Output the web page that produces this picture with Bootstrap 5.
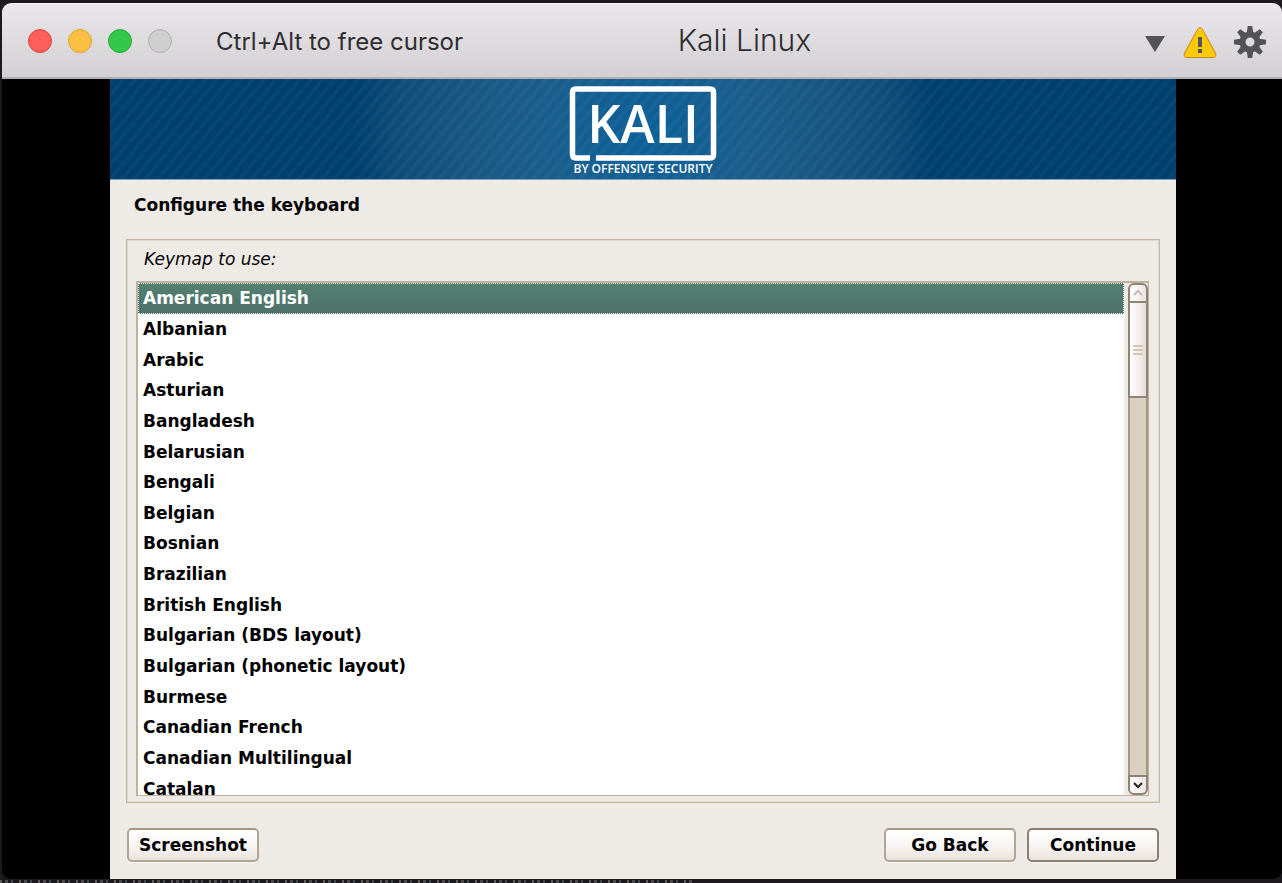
<!DOCTYPE html>
<html lang="en">
<head>
<meta charset="utf-8">
<meta name="viewport" content="width=device-width, initial-scale=1">
<title>Kali Linux</title>
<link href="https://cdn.jsdelivr.net/npm/bootstrap@5.3.0/dist/css/bootstrap.min.css" rel="stylesheet">
<style>
  body { background: #1b191b; font-family: "DejaVu Sans", sans-serif; color: #000; }
  .desktop { padding: 3px 0 4px 2px; background:
    repeating-linear-gradient(90deg, #5b5d61 0 2px, #1b191b 2px 5px, #4c4a4c 5px 8px, #1b191b 8px 11px, #3c4a55 11px 13px, #1b191b 13px 19px) bottom left / 54% 3px no-repeat, #1b191b; }
  .vm-window { background: #000; border-radius: 9px; overflow: hidden; }
  .titlebar { height: 76px; padding: 2px 16px 0 26px; background: linear-gradient(#f4f3f4 0, #e9e7e9 2px, #d2d0d2 100%); border-bottom: 2px solid #b0aeb0; color: #2e2d2f; font-family: Inter, sans-serif; }
  .side-start { flex: 10 1 0; }
  .side-end { flex: 7 1 0; gap: 17px; padding-top: 2px; }
  .light { width: 24px; height: 24px; padding: 0; border: 1px solid; border-radius: 50%; }
  .light-close { background: #fd605c; border-color: #e0443f; }
  .light-min { background: #fdbf43; border-color: #dfa033; }
  .light-max { background: #34c84a; border-color: #23ab35; }
  .light-off { background: #d0cfd0; border-color: #b1b0b1; }
  .hint { font-size: 24px; line-height: 32px; margin-left: 44px; padding-top: 2px; }
  .vm-title { font-size: 30px; font-weight: 300; line-height: 36px; padding-bottom: 2px; }
  .tool { border: 0; padding: 0; background: none; line-height: 0; }
  .screen { margin: 0 106px 0 108px; background: #eeebe6; }
  .banner { height: 101px; border-bottom: 1px solid #7fa3bf; background:
    repeating-linear-gradient(130deg, rgba(255,255,255,.03) 0 3px, transparent 4px 8px, rgba(255,255,255,.03) 9px),
    radial-gradient(circle 290px at 50% 50%, #0b6099 0, #1a5e8d 35%, #185680 65%, #0f4d79 85%, #003f6e 100%); }
  .step-title { font-size: 17px; line-height: 24px; font-weight: 700; padding: 13px 24px 0; margin-bottom: 22px; }
  .question { margin: 0 16px; padding: 7px 10px 6px 9px; border: 1px solid #c4b7a5; box-shadow: inset 0 0 0 1px #e0d9ce; }
  .question-label { font-size: 17px; font-style: italic; line-height: 24px; padding: 0 8px; margin-bottom: 10px; }
  .keymap-box { border: 2px solid #bfb1a0; border-width: 2px 1px 1px 2px; background: #fff; overflow: hidden; }
  .keymaps { height: calc(100% + 9px); }
  .keymap { flex: 1 1 0; min-height: 0; border: 0; padding: 0 5px; text-align: left; background: #fff; color: #000; font-size: 17px; font-weight: 700; line-height: 24px; }
  .keymap.chosen { background: linear-gradient(#54816f, #50786f 50%, #4f7168); color: #fff; outline: 1px dotted #e8efec; outline-offset: -1px; }
  .scroller { width: 24px; padding-left: 4px; background: #eeebe6; }
  .scroll-end { height: 20px; padding: 0; border: 2px solid #8f8373; background: linear-gradient(90deg, #fff, #ece4df); line-height: 0; }
  .scroll-up { border-radius: 6px 6px 0 0; }
  .scroll-down { border-radius: 0 0 6px 6px; }
  .scroll-thumb { height: 95px; border: 2px solid #8f8373; border-top: 0; background: linear-gradient(90deg, #fff, #f3ece9 60%, #e6dcd6); }
  .scroll-track { background: #dcd0c2; border: 2px solid #a49786; border-width: 0 2px; }
  .actions { padding: 25px 17px 17px; gap: 11px; }
  .gtk-btn { width: 132px; height: 34px; padding: 0; border: 2px solid #b3a595; border-top-color: #a59784; border-radius: 5px; background: linear-gradient(#fff, #f6f3f1 60%, #ebe2dc); color: #000; font-size: 17px; font-weight: 700; line-height: 24px; box-shadow: 0 1px 0 #f8f6f3; }
  .gtk-default { border-color: #8b7e72; }
</style>
</head>
<body>
<div class="desktop d-flex flex-column vh-100">
  <main class="vm-window d-flex flex-column flex-grow-1">
    <header class="titlebar d-flex align-items-center flex-shrink-0">
      <div class="side-start d-flex align-items-center">
        <div class="d-flex gap-3">
          <button class="light light-close" type="button" aria-label="Close"></button>
          <button class="light light-min" type="button" aria-label="Minimize"></button>
          <button class="light light-max" type="button" aria-label="Zoom"></button>
          <button class="light light-off" type="button" aria-label="Unavailable" disabled></button>
        </div>
        <span class="hint text-nowrap">Ctrl+Alt to free cursor</span>
      </div>
      <h1 class="vm-title mb-0 text-nowrap">Kali Linux</h1>
      <div class="side-end d-flex align-items-center justify-content-end">
        <button class="tool" type="button" aria-label="Menu"><svg width="22" height="34" viewBox="0 0 22 34"><path d="M1 11h20L11 27z" fill="#535255"/></svg></button>
        <button class="tool" type="button" aria-label="Warnings"><svg width="34" height="34" viewBox="0 0 34 34"><path d="M14.500 4.500q2.500-4 5 0L32.500 28q1.500 4-2.500 4.500H4q-4-.5-2.500-4.500z" fill="#fecb00" stroke="#c7802d"/><path d="M15 12h4v10h-4zm0 12h4v4h-4z" fill="#555"/></svg></button>
        <button class="tool" type="button" aria-label="Settings"><svg width="32" height="34" viewBox="-16 -17 32 34"><g fill="#535255"><path d="M-2.200-16h4.400L3.500-8h-7zM-2.200 16h4.400L3.500 8h-7zM-16-2.200v4.400L-8 3.500v-7zM16-2.200v4.400L8 3.500v-7z"/><path transform="rotate(45)" d="M-2.200-16h4.400L3.500-8h-7zM-2.200 16h4.400L3.500 8h-7zM-16-2.200v4.400L-8 3.500v-7zM16-2.200v4.400L8 3.500v-7z"/></g><circle r="7.500" fill="none" stroke="#535255" stroke-width="6"/></svg></button>
      </div>
    </header>
    <section class="screen d-flex flex-column flex-grow-1">
      <div class="banner text-center flex-shrink-0">
        <svg width="150" height="100" viewBox="0 0 150 100" role="img" aria-label="Kali by Offensive Security">
          <path d="M22 79H8q-3.500 0-3.500-3.500V13.500Q4.500 10 8 10h134q3.500 0 3.500 3.500V75.500q0 3.500-3.500 3.500H28" fill="none" stroke="#fff" stroke-width="5.500"/>
          <text x="75" y="64" text-anchor="middle" font-family="Open Sans, sans-serif" font-weight="600" font-size="52" fill="#fff">KALI</text>
          <text x="75" y="94" text-anchor="middle" font-family="Open Sans, sans-serif" font-weight="600" font-size="12" fill="#fff">BY OFFENSIVE SECURITY</text>
        </svg>
      </div>
      <h2 class="step-title">Configure the keyboard</h2>
      <div class="question d-flex flex-column flex-grow-1">
        <div class="question-label" id="keymap-label">Keymap to use:</div>
        <div class="keymap-box d-flex flex-grow-1">
          <div class="flex-grow-1 position-relative">
          <div class="keymaps position-absolute top-0 start-0 w-100 d-flex flex-column" role="listbox" aria-labelledby="keymap-label">
            <button class="keymap chosen" type="button" role="option" aria-selected="true">American English</button>
            <button class="keymap" type="button" role="option">Albanian</button>
            <button class="keymap" type="button" role="option">Arabic</button>
            <button class="keymap" type="button" role="option">Asturian</button>
            <button class="keymap" type="button" role="option">Bangladesh</button>
            <button class="keymap" type="button" role="option">Belarusian</button>
            <button class="keymap" type="button" role="option">Bengali</button>
            <button class="keymap" type="button" role="option">Belgian</button>
            <button class="keymap" type="button" role="option">Bosnian</button>
            <button class="keymap" type="button" role="option">Brazilian</button>
            <button class="keymap" type="button" role="option">British English</button>
            <button class="keymap" type="button" role="option">Bulgarian (BDS layout)</button>
            <button class="keymap" type="button" role="option">Bulgarian (phonetic layout)</button>
            <button class="keymap" type="button" role="option">Burmese</button>
            <button class="keymap" type="button" role="option">Canadian French</button>
            <button class="keymap" type="button" role="option">Canadian Multilingual</button>
            <button class="keymap" type="button" role="option">Catalan</button>
          </div>
          </div>
          <div class="scroller d-flex flex-column flex-shrink-0">
            <button class="scroll-end scroll-up" type="button" aria-label="Scroll up"><svg width="12" height="12" viewBox="0 0 12 12"><path d="M2 8l4-4 4 4" fill="none" stroke="#c2bcb6" stroke-width="2"/></svg></button>
            <div class="scroll-thumb d-flex align-items-center justify-content-center"><svg width="10" height="12" viewBox="0 0 10 12"><path d="M0 2h10M0 6h10M0 10h10" stroke="#c5b8a9" stroke-width="1.500"/></svg></div>
            <div class="scroll-track flex-grow-1"></div>
            <button class="scroll-end scroll-down" type="button" aria-label="Scroll down"><svg width="12" height="12" viewBox="0 0 12 12"><path d="M2 4l4 4 4-4" fill="none" stroke="#222" stroke-width="2"/></svg></button>
          </div>
        </div>
      </div>
      <div class="actions d-flex">
        <button class="gtk-btn me-auto" type="button">Screenshot</button>
        <button class="gtk-btn" type="button">Go Back</button>
        <button class="gtk-btn gtk-default" type="submit">Continue</button>
      </div>
    </section>
  </main>
</div>
<script src="https://cdn.jsdelivr.net/npm/bootstrap@5.3.0/dist/js/bootstrap.bundle.min.js"></script>
</body>
</html>
